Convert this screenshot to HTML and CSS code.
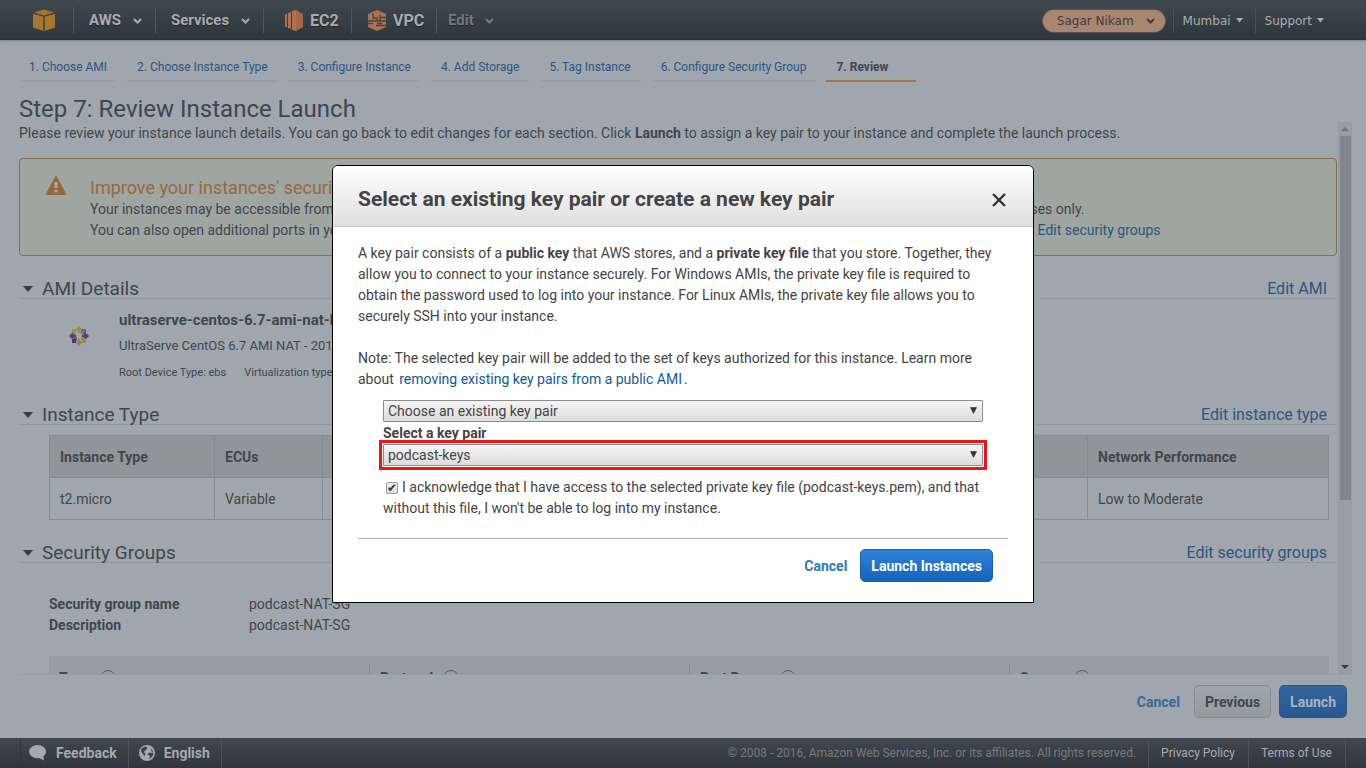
FILE: index.html
```html
<!DOCTYPE html>
<html lang="en">
<head>
<meta charset="utf-8">
<title>Review Instance Launch</title>
<link rel="stylesheet" href="styles.css">
</head>
<body>
<div class="page">
  <header class="topbar">
    <a class="logo" href="#" aria-label="Console home">
      <svg width="22" height="22" viewBox="0 0 22 22"><g fill="#a9782f"><path d="M1 3.500 11 .5l10 3L11 6.500z"/><path d="M0 5l10.300 2.500V22L0 18.500z"/><path d="M22 5 11.700 7.500V22L22 18.500z"/></g><path d="M5 2.500l4 2M17 2.500l-4 2" stroke="#80602f" stroke-width="1"/></svg>
    </a>
    <nav class="mainnav">
      <button class="navitem aws" type="button">AWS <svg class="chev" viewBox="0 0 9 6"><path d="M1 1l3.500 3.500L8 1"/></svg></button>
      <button class="navitem services" type="button">Services <svg class="chev" viewBox="0 0 9 6"><path d="M1 1l3.500 3.500L8 1"/></svg></button>
      <a class="navitem shortcut ec2" href="#"><svg width="18" height="21" viewBox="0 0 18 21"><g fill="#ad7351"><path d="M0 4.500l2-1v14l-2-1zM3 3l3-1v17l-3-1z"/><path d="M7 1l4-1v21l-4-1z"/><path d="M11 0l7 4v13l-7 4z" fill="#a56746"/></g></svg>EC2</a>
      <a class="navitem shortcut vpc" href="#"><svg width="18" height="21" viewBox="0 0 18 21"><path d="M9 0l9 4v13l-9 4-9-4V4z" fill="#ad7351"/><path d="M0 11h18M0 13.500h5M9 13.500h5M5 3v5h4v3M12 5v6M12 7.500h6M8 15.500h10" stroke="#3e454c" stroke-width="1.300" fill="none"/></svg>VPC</a>
      <button class="navitem edit" type="button">Edit <svg class="chev" viewBox="0 0 9 6"><path d="M1 1l3.500 3.500L8 1"/></svg></button>
    </nav>
    <div class="account">
      <button class="user" type="button">Sagar Nikam <svg class="chev" viewBox="0 0 9 6"><path d="M1 1l3.500 3.500L8 1"/></svg></button>
      <button class="acct" type="button">Mumbai <svg class="caret" viewBox="0 0 7 5"><path d="M0 0h7L3.500 4.500z"/></svg></button>
      <button class="acct" type="button">Support <svg class="caret" viewBox="0 0 7 5"><path d="M0 0h7L3.500 4.500z"/></svg></button>
    </div>
  </header>

  <nav class="steps">
    <a href="#">1. Choose AMI</a>
    <a href="#">2. Choose Instance Type</a>
    <a href="#">3. Configure Instance</a>
    <a href="#">4. Add Storage</a>
    <a href="#">5. Tag Instance</a>
    <a href="#">6. Configure Security Group</a>
    <a href="#" class="current" aria-current="step">7. Review</a>
  </nav>
  <h1>Step 7: Review Instance Launch</h1>

  <div class="viewport">
    <main class="content">
      <p class="intro">Please review your instance launch details. You can go back to edit changes for each section. Click <b>Launch</b> to assign a key pair to your instance and complete the launch process.</p>

      <section class="alert">
        <svg class="warn" width="20" height="19" viewBox="0 0 20 19"><path d="M10 1 19 18H1z" fill="#96693a" stroke="#96693a" stroke-width="2" stroke-linejoin="round"/><path d="M10 6v6" stroke="#a9aca7" stroke-width="3"/><circle cx="10" cy="15" r="1.600" fill="#a9aca7"/></svg>
        <div>
          <h2>Improve your instances' security. Your security group, podcast-NAT-SG, is open to the world.</h2>
          <p>Your instances may be accessible from any IP address. We recommend that you update your security group rules to allow access from known IP addresses only.</p>
          <p>You can also open additional ports in your security group to facilitate access to the application or service you're running, e.g., HTTP (80) for web servers. <a href="#">Edit security groups</a></p>
        </div>
      </section>

      <section>
        <div class="sechead"><button class="toggle" type="button" aria-label="Collapse AMI Details"></button><h2>AMI Details</h2><a href="#">Edit AMI</a></div>
        <div class="ami">
          <svg class="centos" width="20" height="20" viewBox="0 0 20 20"><path d="M10 0l3 3-3 5-3-5z" fill="#8d9449"/><path d="M10 20l3-3-3-5-3 5z" fill="#9a8447"/><path d="M0 10l3-3 5 3-5 3z" fill="#55446f"/><path d="M20 10l-3-3-5 3 5 3z" fill="#454678"/><path d="M3 3h4v5z" fill="#91984d"/><path d="M3 3v4l5 2z" fill="#8b9247"/><path d="M17 3h-4l-2 5z" fill="#814d76"/><path d="M17 3v4l-5 2z" fill="#764371"/><path d="M3 17v-4l5-2-1 6z" fill="#3f4274"/><path d="M17 17v-4l-5-2 1 6z" fill="#a58143"/></svg>
          <div class="amitext">
            <h3>ultraserve-centos-6.7-ami-nat-hvm-2015</h3>
            <p>UltraServe CentOS 6.7 AMI NAT - 2015</p>
            <div class="meta"><span>Root Device Type: ebs</span><span>Virtualization type: hvm</span></div>
          </div>
        </div>
      </section>

      <section>
        <div class="sechead"><button class="toggle" type="button" aria-label="Collapse Instance Type"></button><h2>Instance Type</h2><a href="#">Edit instance type</a></div>
        <table class="types">
          <colgroup><col class="c-type"><col class="c-ecu"><col><col class="c-net"></colgroup>
          <thead><tr><th>Instance Type</th><th>ECUs</th><th></th><th>Network Performance</th></tr></thead>
          <tbody><tr><td>t2.micro</td><td>Variable</td><td></td><td>Low to Moderate</td></tr></tbody>
        </table>
      </section>

      <section>
        <div class="sechead"><button class="toggle" type="button" aria-label="Collapse Security Groups"></button><h2>Security Groups</h2><a href="#">Edit security groups</a></div>
        <dl class="group">
          <dt>Security group name</dt><dd>podcast-NAT-SG</dd>
          <dt>Description</dt><dd>podcast-NAT-SG</dd>
        </dl>
        <table class="rules">
          <thead><tr>
            <th><span>Type <i class="info">i</i></span></th>
            <th><span>Protocol <i class="info">i</i></span></th>
            <th><span>Port Range <i class="info">i</i></span></th>
            <th><span>Source <i class="info">i</i></span></th>
          </tr></thead>
        </table>
      </section>
    </main>
    <div class="scrollbar" aria-hidden="true"><span class="up"></span><span class="thumb"></span><span class="down"></span></div>
  </div>

  <div class="actions">
    <a class="cancel" href="#">Cancel</a>
    <button class="btn previous" type="button">Previous</button>
    <button class="btn launch" type="button">Launch</button>
  </div>

  <footer class="footer">
    <button class="foot feedback" type="button"><svg width="18" height="18" viewBox="0 0 19 18"><ellipse cx="9" cy="7.500" rx="9" ry="7"/><path d="M10 14l6 3-1-5z"/></svg>Feedback</button>
    <button class="foot language" type="button"><svg width="16" height="16" viewBox="0 0 16 16"><circle cx="8" cy="8" r="8"/><path d="M2.500 3.500 6 1.500l2.500 1L7 5 4.500 7 6.500 8.500 5.500 11 4 9 2 6.500zM11 3l3 3-1 2-3-.5L8.500 9.500l2.500 1.500-1 3 3-2 1.500-3-1.500-2z" fill="#3a4148"/></svg>English</button>
    <span class="copy">© 2008 - 2016, Amazon Web Services, Inc. or its affiliates. All rights reserved.</span>
    <a href="#">Privacy Policy</a>
    <a href="#">Terms of Use</a>
  </footer>
</div>

<div class="overlay">
  <div class="dialog" role="dialog" aria-modal="true" aria-labelledby="dialog-title">
    <div class="dialoghead">
      <h2 id="dialog-title">Select an existing key pair or create a new key pair</h2>
      <button class="close" type="button" aria-label="Close"><svg width="14" height="14" viewBox="0 0 14 14"><path d="M1 1l12 12M13 1L1 13" stroke="#333" stroke-width="2.400"/></svg></button>
    </div>
    <div class="dialogbody">
      <p>A key pair consists of a <b>public key</b> that AWS stores, and a <b>private key file</b> that you store. Together, they allow you to connect to your instance securely. For Windows AMIs, the private key file is required to obtain the password used to log into your instance. For Linux AMIs, the private key file allows you to securely SSH into your instance.</p>
      <p class="note">Note: The selected key pair will be added to the set of keys authorized for this instance. Learn more about <a href="#">removing existing key pairs from a public AMI</a>.</p>
      <form class="keyform">
        <div class="select"><select aria-label="Key pair option"><option>Choose an existing key pair</option></select><span>▼</span></div>
        <label class="keylabel" for="key">Select a key pair</label>
        <div class="select marked"><select id="key"><option>podcast-keys</option></select><span>▼</span></div>
        <label class="ack"><input type="checkbox" checked>I acknowledge that I have access to the selected private key file (podcast-keys.pem), and that without this file, I won't be able to log into my instance.</label>
      </form>
      <div class="dialogfoot">
        <a class="cancel" href="#">Cancel</a>
        <button class="btn primary" type="button">Launch Instances</button>
      </div>
    </div>
  </div>
</div>
</body>
</html>
```
FILE: styles.css
```css
* { box-sizing: border-box; }
body { margin: 0; background: #9fa6ad; color: #40464d; font: 14px/21px Roboto, sans-serif; }
h1, h2, h3, p, dl, dd { margin: 0; font-weight: 400; }
button { font: inherit; color: inherit; background: none; border: 0; padding: 0; }
a { color: #2d557f; text-decoration: none; }
.page { height: 100vh; min-height: 480px; display: flex; flex-direction: column; overflow: hidden; }

/* Top bar */
.topbar { height: 40px; flex: none; display: flex; align-items: center; background: linear-gradient(#414950, #2f363e); border-bottom: 1px solid #2b3138; box-shadow: 0 1px 2px #7c838c; color: #a9acb0; }
.logo { width: 73px; padding-left: 33px; display: flex; }
.mainnav { display: flex; flex: 1; }
.navitem { height: 26px; display: flex; align-items: center; border-left: 1px solid #50575e; font-size: 15px; font-weight: 700; color: #a9acb0; text-shadow: 0 1px 1px #22272c; padding-top: 2px; }
.chev { width: 9px; height: 6px; margin-left: 12px; fill: none; stroke: currentColor; stroke-width: 2; }
.aws { width: 82px; padding-left: 15px; }
.services { width: 108px; padding-left: 15px; }
.shortcut { gap: 7px; font-size: 16px; }
.ec2 { width: 88px; padding-left: 21px; }
.vpc { width: 85px; padding-left: 16px; }
.edit { padding-left: 11px; color: #72787f; }
.edit .chev { margin-left: 11px; }
.account { display: flex; align-items: center; font: 12px/20px "DejaVu Sans", sans-serif; padding-right: 30px; }
.user { display: flex; align-items: center; height: 22px; margin-top: 2px; padding: 0 10px 0 14px; margin-right: 8px; border-radius: 11px; background: #a98670; color: #3b3f45; box-shadow: 0 0 2px #a98670; }
.user .chev { margin-left: 12px; }
.acct { display: flex; align-items: center; height: 26px; padding: 2px 12px 0 9px; border-left: 1px solid #4b5259; }
.caret { width: 7px; height: 5px; margin-left: 5px; fill: currentColor; }

/* Wizard steps */
.steps { flex: none; display: flex; gap: 10px; padding: 17px 19px 0; font-size: 12px; }
.steps a { height: 25px; padding: 0 10px; border-bottom: 2px solid #979ea5; white-space: nowrap; }
.steps .current { min-width: 90px; border-color: #a2783f; color: #40464d; font-weight: 700; }
h1 { flex: none; padding: 15px 19px 0; font-size: 24px; line-height: 25px; }

/* Scrolling content */
.viewport { flex: 1; min-height: 0; margin: 0 14px 0 19px; display: flex; border-bottom: 1px solid #979ea5; }
.content { flex: 1; min-width: 0; overflow: hidden; }
.intro { padding-top: 1px; }
.alert { display: flex; gap: 24px; margin-top: 14px; padding: 17px 26px 14px; border: 1px solid #8b6f4b; border-radius: 4px; background: #9fa5a1; white-space: nowrap; overflow: hidden; }
.alert h2 { font-size: 18px; line-height: 23px; color: #966b3e; }
.alert a { margin-left: 2px; }
.warn { flex: none; }
.sechead { display: flex; align-items: center; height: 22px; margin: 21px 0 0; padding-top: 2px; border-bottom: 1px solid #92999f; font-size: 16px; }
.sechead h2 { flex: 1; font-size: 19px; }
.sechead a { padding-right: 10px; }
.toggle { margin: 0 9px 0 4px; border: 5px solid transparent; border-top: 6px solid #353c43; border-bottom: 0; }
.ami { display: flex; height: 104px; padding-top: 10px; overflow: hidden; }
.centos { flex: none; margin: 17px 30px 0 50px; }
.amitext h3 { font-size: 15px; line-height: 22px; font-weight: 700; }
.amitext p { font-size: 13px; line-height: 30px; }
.meta { display: flex; gap: 18px; font-size: 11px; line-height: 24px; }
section:nth-of-type(3) .sechead { margin-top: 0; }
table { border-collapse: collapse; table-layout: fixed; text-align: left; }
.types { width: calc(100% - 38px); margin: 10px 0 0 30px; }
.types th, .types td { height: 42px; padding: 2px 10px 0; border: 1px solid #858c93; }
.types th { background: #8f959b; }
.c-type { width: 165px; }
.c-ecu { width: 108px; }
.c-net { width: 241px; }
.group { display: grid; grid-template-columns: 200px 1fr; padding: 31px 0 20px 30px; }
.group dt { font-weight: 700; }
.rules { width: calc(100% - 38px); margin-left: 30px; background: #969ca3; }
.rules th { height: 42px; padding: 7px 0; }
.rules span { display: flex; align-items: center; gap: 10px; height: 28px; padding: 2px 0 0 10px; border-left: 1px solid #868d94; }
.rules th:first-child span { border-left: 0; }
.info { display: block; width: 16px; height: 16px; border: 1px solid #5b6269; border-radius: 50%; font: 700 11px/14px "Liberation Serif", serif; text-align: center; }
.scrollbar { width: 14px; display: flex; flex-direction: column; align-items: center; background: #979da4; margin-left: 1px; }
.up, .down { flex: none; border: 4px solid transparent; }
.up { margin: 5px 0 5px; border-bottom-color: #6d747b; border-top: 0; }
.thumb { width: 11px; height: 66%; background: #7f868e; }
.down { margin: auto 0 5px; border-top-color: #363d44; border-bottom: 0; }

/* Buttons */
.actions { flex: none; display: flex; align-items: flex-start; gap: 8px; height: 63px; padding: 10px 19px 0; justify-content: flex-end; }
.cancel { padding: 7px 6px 5px; color: #33699b; font-weight: 700; }
.btn { height: 33px; padding: 2px 10px 0; border: 1px solid #858c93; border-radius: 5px; font-weight: 700; }
.previous { background: linear-gradient(#9ea5ac, #92999f); }
.launch { background: linear-gradient(#34669c, #275990); border-color: #285582; color: #a9b4c2; }

/* Footer */
.footer { flex: none; height: 30px; display: flex; align-items: center; padding: 0 20px; background: linear-gradient(#41484f, #2f363d); color: #a4a9ae; font-size: 12px; }
.foot { display: flex; align-items: center; gap: 9px; height: 30px; padding: 0 11px 0 8px; border-left: 1px solid #30363c; font-size: 14px; font-weight: 700; }
.foot svg { fill: #a4a9ae; }
.language { padding-left: 10px; border-right: 1px solid #4b5259; border-left-color: #4b5259; }
.copy { margin-left: auto; padding-right: 12px; color: #747a80; }
.footer a { padding: 4px 12px; border-left: 1px solid #4b5259; color: #a9acb0; }
.footer a:last-child { padding-right: 13px; border-right: 1px solid #4b5259; }
.footer a:nth-last-child(2) { padding-right: 13px; }

/* Key pair dialog */
.overlay { position: fixed; inset: 0; display: flex; align-items: center; justify-content: center; }
.dialog { width: 702px; max-width: 96vw; border: 1px solid #000; border-radius: 6px 6px 0 0; background: #fff; color: #444; overflow: hidden; }
.dialoghead { display: flex; align-items: center; justify-content: space-between; padding: 20px 27px 13px 25px; background: linear-gradient(#fff, #dfdfdf); border-bottom: 1px solid #ccc; }
.dialoghead h2 { font-size: 21px; line-height: 27px; font-weight: 700; }
.close { display: flex; }
.dialogbody { padding: 16px 25px 20px; }
.note { margin-top: 21px; }
.note a { margin: 0 2px; color: #0f5a99; }
.keyform { padding: 10px 25px 0; }
.select { position: relative; height: 22px; }
.select select { appearance: none; display: block; width: 100%; height: 22px; padding: 0 4px; border: 1px solid #8d8d8d; border-radius: 1px; background: linear-gradient(#f5f5f5, #dcdcdc); color: #444; font: inherit; line-height: 20px; }
.select span { position: absolute; right: 6px; top: 0; font: 9px/20px "DejaVu Sans", sans-serif; color: #333; pointer-events: none; }
.marked { outline: 3px solid #f01414; outline-offset: 1px; }
.keylabel { display: block; line-height: 22px; font-weight: 700; }
.ack { display: block; margin-top: 11px; }
.ack input { appearance: none; width: 12px; height: 12px; margin: 0 4px 0 3px; vertical-align: 0; border: 1px solid #999; border-radius: 2px; background: linear-gradient(#f4f4f4, #ddd); display: inline-grid; place-items: center; }
.ack input:checked::before { content: "✔"; font: 12px/10px "DejaVu Sans", sans-serif; color: #333; }
.dialogfoot { display: flex; justify-content: flex-end; gap: 7px; margin-top: 19px; padding: 10px 15px 0; border-top: 1px solid #b5b5b5; }
.dialogfoot .cancel { color: #3078be; }
.primary { border-color: #1a5fae; background: linear-gradient(#2f84d8, #1563bb); color: #fff; }
```
